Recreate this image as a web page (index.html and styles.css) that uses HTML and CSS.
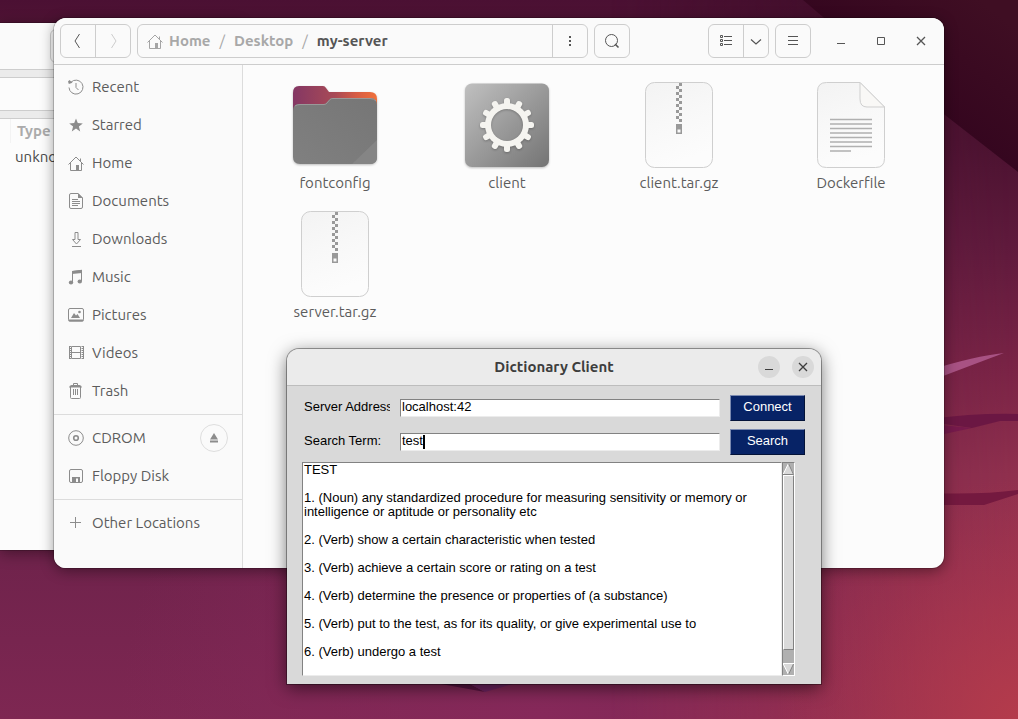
FILE: index.html
```html
<!DOCTYPE html>
<html lang="en">
<head>
<meta charset="utf-8">
<title>Desktop</title>
<link rel="stylesheet" href="styles.css">
</head>
<body class="desktop">

<svg class="wallpaper" viewBox="0 0 1018 719" preserveAspectRatio="none" aria-hidden="true">
  <defs>
    <linearGradient id="wp-base" x1="0" y1="0" x2="0" y2="1">
      <stop offset="0" stop-color="#4b1033"/>
      <stop offset="0.04" stop-color="#501434"/>
      <stop offset="0.78" stop-color="#70234c"/>
      <stop offset="1" stop-color="#7e2752"/>
    </linearGradient>
    <linearGradient id="wp-right" x1="0" y1="0" x2="0" y2="1">
      <stop offset="0" stop-color="#3b0c25"/>
      <stop offset="0.2" stop-color="#4b1230"/>
      <stop offset="0.34" stop-color="#5f1a3c"/>
      <stop offset="0.52" stop-color="#7b2446"/>
      <stop offset="0.66" stop-color="#90304e"/>
      <stop offset="0.85" stop-color="#a1344f"/>
      <stop offset="1" stop-color="#a8374e"/>
    </linearGradient>
    <linearGradient id="wp-fade" x1="0.6" y1="0" x2="1" y2="0">
      <stop offset="0" stop-color="#000"/>
      <stop offset="1" stop-color="#fff"/>
    </linearGradient>
    <mask id="wp-mask"><rect width="1018" height="719" fill="url(#wp-fade)"/></mask>
    <radialGradient id="wp-mid" gradientUnits="userSpaceOnUse" cx="540" cy="719" r="420">
      <stop offset="0" stop-color="#86295a"/>
      <stop offset="1" stop-color="#86295a" stop-opacity="0"/>
    </radialGradient>
    <radialGradient id="wp-corner" gradientUnits="userSpaceOnUse" cx="1018" cy="719" r="240">
      <stop offset="0" stop-color="#b43b4b"/>
      <stop offset="1" stop-color="#a1344f" stop-opacity="0"/>
    </radialGradient>
    <linearGradient id="wp-dark" gradientUnits="userSpaceOnUse" x1="910" y1="90" x2="980" y2="0">
      <stop offset="0" stop-color="#35061f"/>
      <stop offset="1" stop-color="#3f0e23"/>
    </linearGradient>
  </defs>
  <rect width="1018" height="719" fill="url(#wp-base)"/>
  <rect width="1018" height="719" fill="url(#wp-mid)"/>
  <rect width="1018" height="719" fill="url(#wp-right)" mask="url(#wp-mask)"/>
  <rect width="1018" height="719" fill="url(#wp-corner)"/>
  <path d="M803 0L823 17L945 115L1018 172V0Z" fill="url(#wp-dark)"/>
  <path d="M930 370Q975 356 1004 353Q980 362 930 381Z" fill="#a85283"/>
  <path d="M930 419Q975 413 1018 414V421H1000L972 428L930 422Z" fill="#6b1743"/>
  <path d="M930 424L972 428L930 437Z" fill="#761a4c"/>
  <path d="M930 493Q980 495 1018 490V494L984 505H930Z" fill="#74193f"/>
  <path d="M441 684H470L485 692Z" fill="#561340"/>
  <path d="M470 684H513L485 692Z" fill="#6d2360"/>
</svg>

<section class="window back-window" aria-label="Background window">
  <div class="back-header"><span class="back-button"></span></div>
  <div class="back-band"></div>
  <div class="back-toolbar"></div>
  <div class="back-band"></div>
  <div class="back-column">Type</div>
  <div class="back-cell">unknown</div>
</section>

<main class="window files">
  <header class="headerbar">
    <div class="group">
      <button class="tool" type="button" aria-label="Back"><svg class="icon" viewBox="0 0 16 16"><path d="M9.500 1L5 8L9.500 15" stroke="#555"/></svg></button>
      <button class="tool" type="button" aria-label="Forward"><svg class="icon" viewBox="0 0 16 16"><path d="M6.500 1L11 8L6.500 15" stroke="#ccc"/></svg></button>
    </div>
    <div class="group pathbar">
      <nav class="crumbs" aria-label="Path">
        <svg class="icon crumb-icon" viewBox="0 0 16 16"><path d="M.5 9.500L8 2L15.500 9.500M2.500 8V15.500H13.500V8M12.500 6V3.500" stroke="#a5a5a5"/><path d="M8 10h3v5.500h-3z" fill="#a5a5a5"/></svg>
        <a class="crumb" href="#home">Home</a>
        <span class="slash">/</span>
        <a class="crumb" href="#desktop">Desktop</a>
        <span class="slash">/</span>
        <a class="crumb current" href="#my-server">my-server</a>
      </nav>
      <button class="tool" type="button" aria-label="Folder menu"><svg class="icon" viewBox="0 0 16 16"><path d="M7 3h2v2h-2zM7 7h2v2h-2zM7 11h2v2h-2z" fill="#555"/></svg></button>
    </div>
    <button class="tool single" type="button" aria-label="Search files"><svg class="icon" viewBox="0 0 16 16"><circle cx="7.500" cy="7.500" r="6" stroke="#555"/><path d="M11 11L14.500 14.500" stroke="#555" stroke-width="1.600"/></svg></button>
    <div class="spacer"></div>
    <div class="group">
      <button class="tool" type="button" aria-label="List view"><svg class="icon" viewBox="0 0 16 16"><path d="M2.500 2.500h2v2h-2zM2.500 6.500h2v2h-2zM2.500 10.500h2v2h-2zM6 3.500h8M6 7.500h8M6 11.500h8" stroke="#555"/></svg></button>
      <button class="tool narrow" type="button" aria-label="View options"><svg class="icon" viewBox="0 0 16 16"><path d="M3 6.500L8 11L13 6.500" stroke="#555" stroke-width="1.200"/></svg></button>
    </div>
    <button class="tool single" type="button" aria-label="Menu"><svg class="icon" viewBox="0 0 16 16"><path d="M3 3.500h10M3 7.500h10M3 11.500h10" stroke="#555"/></svg></button>
    <div class="controls">
      <button class="control" type="button" aria-label="Minimize"><svg class="icon" viewBox="0 0 16 16"><path d="M4 10.500h8" stroke="#555"/></svg></button>
      <button class="control" type="button" aria-label="Maximize"><svg class="icon" viewBox="0 0 16 16"><path d="M4.500 4.500h7v7h-7z" stroke="#555"/></svg></button>
      <button class="control" type="button" aria-label="Close"><svg class="icon" viewBox="0 0 16 16"><path d="M4 4L12 12M12 4L4 12" stroke="#555" stroke-width="1.300"/></svg></button>
    </div>
  </header>

  <div class="files-body">
    <nav class="sidebar" aria-label="Places">
      <a class="place" href="#recent"><svg class="icon" viewBox="0 0 16 16"><path d="M3 3.200A7 7 0 1 1 1 8.500M8 4V8.500L10.500 11" stroke="#8c8c8c"/><path d="M0 2.500L1.500 1L4.500 3.800L.8 5Z" fill="#8c8c8c"/></svg>Recent</a>
      <a class="place" href="#starred"><svg class="icon" viewBox="0 0 16 16"><path d="M8 1.500L9.800 6.100L14.800 6.400L10.900 9.500L12.200 14.400L8 11.600L3.800 14.400L5.100 9.500L1.200 6.400L6.200 6.100Z" fill="#8c8c8c"/></svg>Starred</a>
      <a class="place" href="#home"><svg class="icon" viewBox="0 0 16 16"><path d="M.5 9.500L8 2L15.500 9.500M2.500 8V15.500H13.500V8M12.500 6V3.500" stroke="#8c8c8c"/><path d="M8 10h3v5.500h-3z" fill="#8c8c8c"/></svg>Home</a>
      <a class="place" href="#documents"><svg class="icon" viewBox="0 0 16 16"><path d="M3 .5H10L14.500 5V14Q14.500 15.500 13 15.500H3Q1.500 15.500 1.500 14V2Q1.500 .5 3 .5ZM4 6.500h6M4 8.500h8M4 10.500h8M4 12.500h6" stroke="#8c8c8c"/><path d="M10 0L15 5H10Z" fill="#8c8c8c"/></svg>Documents</a>
      <a class="place" href="#downloads"><svg class="icon" viewBox="0 0 16 16"><path d="M7 1.500H10V8.500H12.500L8.500 13L4.500 8.500H7ZM4 15.500h9" stroke="#8c8c8c"/></svg>Downloads</a>
      <a class="place" href="#music"><svg class="icon" viewBox="0 0 16 16"><path d="M4.500 13V2.500L13.500 1.500V12" stroke="#8c8c8c"/><path d="M4 2L14 .8V4L4 5Z" fill="#8c8c8c"/><ellipse cx="3" cy="13.500" rx="2.200" ry="1.900" fill="#8c8c8c"/><ellipse cx="11.800" cy="12.500" rx="2.200" ry="1.900" fill="#8c8c8c"/></svg>Music</a>
      <a class="place" href="#pictures"><svg class="icon" viewBox="0 0 16 16"><rect x=".5" y="1.500" width="15" height="12.500" rx="1.500" stroke="#8c8c8c"/><path d="M.5 12.500h15v1q0 1-1 1h-13q-1 0-1-1zM3 11L6 6L8 8.500L9.500 7L12 11Z" fill="#8c8c8c"/><circle cx="11.500" cy="5" r="1.300" fill="#8c8c8c"/></svg>Pictures</a>
      <a class="place" href="#videos"><svg class="icon" viewBox="0 0 16 16"><path d="M3.500 1.500h9v12h-9zM3.500 7.500h9" stroke="#8c8c8c"/><path d="M2 1v14M14.500 1v14" stroke="#8c8c8c" stroke-width="2" stroke-dasharray="1 1"/><path d="M1.500 1v13M15.500 1v13" stroke="#8c8c8c"/></svg>Videos</a>
      <a class="place" href="#trash"><svg class="icon" viewBox="0 0 16 16"><path d="M2.500 4V14.500Q2.500 15.500 3.500 15.500H11.500Q12.500 15.500 12.500 14.500V4M5.500 6v6M7.500 6v6M9.500 6v6M5.500 2.500V.5H9.500V2.500" stroke="#8c8c8c"/><path d="M1 4.500Q1.500 2 3.500 2H11.500Q13.500 2 14 4.500Z" fill="#8c8c8c"/></svg>Trash</a>
      <hr class="divider">
      <div class="place-row">
        <a class="place" href="#cdrom"><svg class="icon" viewBox="0 0 16 16"><circle cx="8" cy="8" r="7.300" stroke="#8c8c8c"/><circle cx="8" cy="8" r="2.300" stroke="#8c8c8c" stroke-width="1.600"/></svg>CDROM</a>
        <button class="eject" type="button" aria-label="Eject CDROM"><svg class="icon" viewBox="0 0 16 16"><path d="M8 3L12 9.500H4ZM4 10.500h8v2h-8z" fill="#8c8c8c"/></svg></button>
      </div>
      <a class="place" href="#floppy"><svg class="icon" viewBox="0 0 16 16"><rect x="1.500" y="1.500" width="13" height="13" rx="1.500" stroke="#8c8c8c"/><path d="M4 9h8v5.500h-2v-4h-2v4h-4z" fill="#8c8c8c"/></svg>Floppy Disk</a>
      <hr class="divider">
      <a class="place" href="#other"><svg class="icon" viewBox="0 0 16 16"><path d="M2 7.500h11M7.500 2v11" stroke="#8c8c8c"/></svg>Other Locations</a>
    </nav>

    <ul class="file-grid">
      <li class="file">
        <svg class="file-icon" viewBox="0 0 96 96" aria-hidden="true">
          <defs>
            <linearGradient id="folder-back"><stop offset="0" stop-color="#843764"/><stop offset="0.5" stop-color="#a84a56"/><stop offset="0.75" stop-color="#d65c45"/><stop offset="1" stop-color="#f0703a"/></linearGradient>
            <linearGradient id="folder-front" x1="1" y1="0" x2="0" y2="1"><stop offset="0" stop-color="#767676"/><stop offset="1" stop-color="#808080"/></linearGradient>
          </defs>
          <g class="soft-shadow">
            <path d="M12 9H36Q38 9 39 11L42 15H83Q90 15 90 22V70H6V16Q6 9 12 9Z" fill="url(#folder-back)"/>
            <path d="M12 27H37Q39 27 40 25L43 22Q44 21 46 21H83Q90 21 90 28V80Q90 87 83 87H13Q6 87 6 80V34Q6 27 12 27Z" fill="url(#folder-front)"/>
          </g>
          <path d="M8 29Q10 27.500 13 27.500H37Q39 27.500 40 26L43 22.500Q44 21.500 46 21.500H83Q87 21.500 89 24" fill="none" stroke="#999"/>
          <path d="M90 63V80Q90 87 83 87H65Z" fill="#858585"/>
        </svg>
        <span class="file-name">fontconfig</span>
      </li>
      <li class="file">
        <svg class="file-icon" viewBox="0 0 96 96" aria-hidden="true">
          <defs>
            <linearGradient id="app-fill" x1="0" y1="0" x2="1" y2="1"><stop offset="0" stop-color="#c0c0c0"/><stop offset="1" stop-color="#747474"/></linearGradient>
            <mask id="gear-mask"><rect width="96" height="96" fill="#fff"/><circle cx="48" cy="48" r="16" fill="#000"/></mask>
            <rect id="cog-bar" x="45" y="21" width="6" height="54" rx="2.500"/>
          </defs>
          <rect class="soft-shadow" x="6" y="6.500" width="84" height="83.500" rx="7" fill="url(#app-fill)"/>
          <g class="soft-shadow">
            <g mask="url(#gear-mask)" fill="#f5f4f0">
              <circle cx="48" cy="48" r="22"/>
              <use href="#cog-bar"/>
              <use href="#cog-bar" transform="rotate(30 48 48)"/>
              <use href="#cog-bar" transform="rotate(60 48 48)"/>
              <use href="#cog-bar" transform="rotate(90 48 48)"/>
              <use href="#cog-bar" transform="rotate(120 48 48)"/>
              <use href="#cog-bar" transform="rotate(150 48 48)"/>
            </g>
          </g>
        </svg>
        <span class="file-name">client</span>
      </li>
      <li class="file">
        <svg class="file-icon" viewBox="0 0 96 96" aria-hidden="true">
          <defs>
            <linearGradient id="paper" x1="0" y1="0" x2="0.300" y2="1"><stop offset="0" stop-color="#f3f3f3"/><stop offset="0.500" stop-color="#f8f8f8"/><stop offset="1" stop-color="#fcfcfc"/></linearGradient>
            <g id="archive">
              <rect x="14.500" y="5.500" width="67" height="85" rx="9" fill="url(#paper)" stroke="#cfcfcf"/>
              <path d="M49.500 6V45" stroke="#999" stroke-width="3" stroke-dasharray="3 3"/>
              <path d="M46.500 9V42" stroke="#999" stroke-width="3" stroke-dasharray="3 3"/>
              <rect x="45" y="47" width="6" height="10" fill="#999"/>
              <rect x="46.500" y="52.500" width="3" height="3" fill="#fafafa"/>
            </g>
          </defs>
          <use href="#archive"/>
        </svg>
        <span class="file-name">client.tar.gz</span>
      </li>
      <li class="file">
        <svg class="file-icon" viewBox="0 0 96 96" aria-hidden="true">
          <path d="M23.500 5.500H57L81.500 30V81.500Q81.500 90.500 72.500 90.500H23.500Q14.500 90.500 14.500 81.500V14.500Q14.500 5.500 23.500 5.500Z" fill="url(#paper)" stroke="#cfcfcf"/>
          <path d="M57 5.500L81.500 30H64Q57 30 57 22Z" fill="#f9f8f6" stroke="#cfcfcf"/>
          <path d="M27 42.500h42M27 47h42M27 51.500h42M27 56h42M27 60.500h42M27 65h42M27 69.500h42M27 74h21" stroke="#b0b0b0" stroke-width="1.300"/>
        </svg>
        <span class="file-name">Dockerfile</span>
      </li>
      <li class="file">
        <svg class="file-icon" viewBox="0 0 96 96" aria-hidden="true"><use href="#archive"/></svg>
        <span class="file-name">server.tar.gz</span>
      </li>
    </ul>
  </div>
</main>

<section class="window dialog" aria-labelledby="dialog-title">
  <header class="titlebar">
    <h1 class="title" id="dialog-title">Dictionary Client</h1>
    <div class="title-controls">
      <button class="round" type="button" aria-label="Minimize dialog"><svg class="icon" viewBox="0 0 16 16"><path d="M4 10.500h8" stroke="#3d3d3d"/></svg></button>
      <button class="round" type="button" aria-label="Close dialog"><svg class="icon" viewBox="0 0 16 16"><path d="M4 4L12 12M12 4L4 12" stroke="#3d3d3d" stroke-width="1.300"/></svg></button>
    </div>
  </header>
  <form class="lookup">
    <label class="lookup-label" for="server">Server Address:</label>
    <div class="field"><input class="entry" id="server" type="text" value="localhost:42"></div>
    <button class="action" type="button">Connect</button>
    <label class="lookup-label" for="term">Search Term:</label>
    <div class="field"><input class="entry" id="term" type="text" value="test"><span class="caret"></span></div>
    <button class="action" type="button">Search</button>
  </form>
  <div class="result">
    <textarea class="definition" rows="15" readonly aria-label="Definition">TEST

1. (Noun) any standardized procedure for measuring sensitivity or memory or intelligence or aptitude or personality etc

2. (Verb) show a certain characteristic when tested

3. (Verb) achieve a certain score or rating on a test

4. (Verb) determine the presence or properties of (a substance)

5. (Verb) put to the test, as for its quality, or give experimental use to

6. (Verb) undergo a test</textarea>
    <div class="scrollbar" aria-hidden="true">
      <svg class="arrow" viewBox="0 0 11 12"><path d="M5.500 0L11 11.500H0Z" fill="#d9d9d9"/><path d="M0 11.500L5.500 .5" stroke="#fff"/><path d="M5.500 .5L10.500 11.500H0" fill="none" stroke="#828282"/></svg>
      <div class="thumb"></div>
      <div class="trough"></div>
      <svg class="arrow" viewBox="0 0 11 12"><path d="M5.500 12L11 .5H0Z" fill="#d9d9d9"/><path d="M11 .5H0L5.500 11.500" fill="none" stroke="#fff"/><path d="M5.500 11.500L10.500 1" stroke="#828282"/></svg>
    </div>
  </div>
</section>

</body>
</html>
```
FILE: styles.css
```css
* { box-sizing: border-box; }

.desktop {
  position: relative;
  min-height: 100vh;
  margin: 0;
  overflow: hidden;
  background: #70234c;
  color: #5c5c5c;
  font: 15px/20px "Ubuntu", "Noto Sans", sans-serif;
}

.wallpaper {
  position: absolute;
  inset: 0;
  width: 100%;
  height: 100%;
}

button {
  margin: 0;
  padding: 0;
  border: 0;
  background: none;
  color: inherit;
  font: inherit;
}

a { color: inherit; text-decoration: none; }

.icon {
  flex: none;
  width: 16px;
  height: 16px;
  fill: none;
}

/* Windows on the desktop */
.window {
  position: absolute;
  box-shadow: 0 0 0 1px rgba(0, 0, 0, 0.18), 0 3px 14px rgba(0, 0, 0, 0.4);
}

.back-window {
  top: 23px;
  left: 0;
  width: 240px;
  min-height: 527px;
  background: #fcfcfc;
}

.back-header {
  height: 47px;
  padding: 6px 50px;
  border-bottom: 1px solid #cdcdcd;
  background: #fafafa;
}

.back-button {
  display: block;
  width: 36px;
  height: 34px;
  border: 1px solid #cdcdcd;
  border-radius: 6px;
}

.back-band {
  height: 8px;
  border-bottom: 1px solid #cdcdcd;
  background: #ebebeb;
}

.back-toolbar {
  height: 33px;
  border-bottom: 1px solid #cdcdcd;
}

.back-column {
  margin-left: 10px;
  padding: 2px 6px;
  border-left: 1px solid #f3f3f3;
  color: #ababab;
  font-weight: bold;
}

.back-cell {
  padding: 4px 15px;
  color: #4a4a4a;
}

/* File manager */
.files {
  top: 18px;
  right: 74px;
  left: 54px;
  display: flex;
  flex-direction: column;
  min-height: 550px;
  overflow: hidden;
  border-radius: 12px;
  background: #fcfcfc;
}

.headerbar {
  display: flex;
  gap: 6px;
  padding: 6px 3px 6px 6px;
  border-bottom: 1px solid #cdcdcd;
  background: #fafafa;
}

.group,
.single {
  height: 34px;
  border: 1px solid #cdcdcd;
  border-radius: 6px;
}

.group { display: flex; }

.tool {
  display: flex;
  align-items: center;
  justify-content: center;
  width: 34px;
}

.tool + .tool,
.crumbs + .tool {
  width: 35px;
  border-left: 1px solid #cdcdcd;
}

.tool.single { width: 36px; }
.tool + .tool.narrow { width: 25px; }

.pathbar { flex: 0 1 451px; }

.crumbs {
  display: flex;
  flex: 1;
  align-items: center;
  gap: 9px;
  padding: 0 9px;
  color: #a8a8a8;
  font-weight: bold;
}

.crumb-icon { margin-right: -3px; }
.current { color: #555; }
.slash { font-weight: normal; }
.spacer { flex: 1; }

.controls {
  display: flex;
  padding-left: 4px;
}

.control {
  display: flex;
  align-items: center;
  justify-content: center;
  width: 40px;
}

.files-body { display: flex; flex: 1; }

.sidebar {
  flex: none;
  width: 189px;
  padding-top: 3px;
  border-right: 1px solid #dcdcdc;
  background: #fafafa;
}

.place {
  display: flex;
  flex: 1;
  align-items: center;
  gap: 8px;
  height: 38px;
  padding-left: 14px;
}

.place-row {
  display: flex;
  align-items: center;
  padding-right: 14px;
}

.eject {
  display: flex;
  align-items: center;
  justify-content: center;
  width: 28px;
  height: 28px;
  border: 1px solid #dedede;
  border-radius: 50%;
}

.divider {
  margin: 4px 0;
  border: 0;
  border-top: 1px solid #dcdcdc;
}

.file-grid {
  display: grid;
  flex: 1;
  grid-template-columns: repeat(4, 1fr);
  align-content: start;
  row-gap: 13px;
  margin: 0;
  padding: 12px 7px 12px 6px;
  list-style: none;
}

.file {
  display: flex;
  flex-direction: column;
  align-items: center;
}

.file-icon { width: 96px; height: 96px; }
.soft-shadow { filter: drop-shadow(0 1px 1px rgba(0, 0, 0, 0.25)); }

/* Dictionary dialog */
.dialog {
  top: 349px;
  left: 287px;
  width: 534px;
  border-radius: 12px 12px 0 0;
  background: #d9d9d9;
  color: #000;
  font: 13px/14px "Liberation Sans", Arial, sans-serif;
  box-shadow: 0 0 0 1px rgba(0, 0, 0, 0.35), 0 4px 18px rgba(0, 0, 0, 0.55);
}

.titlebar {
  display: grid;
  grid-template-columns: 1fr auto 1fr;
  align-items: center;
  height: 37px;
  padding: 0 7px;
  border-bottom: 1px solid #bdbdbd;
  border-radius: 12px 12px 0 0;
  background: #ebebeb;
}

.title {
  grid-column: 2;
  margin: 0;
  color: #3d3d3d;
  font: bold 15px/20px "Ubuntu", "Noto Sans", sans-serif;
}

.title-controls {
  display: flex;
  justify-content: flex-end;
  gap: 12px;
}

.round {
  display: flex;
  align-items: center;
  justify-content: center;
  width: 22px;
  height: 22px;
  border-radius: 50%;
  background: #d9d9d9;
}

.lookup {
  display: grid;
  grid-template-columns: 86px 1fr 75px;
  align-items: center;
  gap: 8px 10px;
  padding: 9px 16px 7px 17px;
}

.lookup-label {
  overflow: hidden;
  padding-bottom: 2px;
  white-space: nowrap;
}

.field { position: relative; }

.entry {
  display: block;
  width: 100%;
  height: 18px;
  padding: 0 1px 3px;
  border: 1px solid;
  border-color: #828282 #ececec #ececec #828282;
  background: #fff;
  color: #000;
  font: inherit;
  line-height: 13px;
}

.caret {
  position: absolute;
  top: 2px;
  left: 23px;
  width: 2px;
  height: 14px;
  background: #000;
}

.action {
  height: 26px;
  padding-bottom: 2px;
  border: 1px solid;
  border-color: #7b8ab0 #041338 #041338 #7b8ab0;
  background: #072366;
  color: #fff;
}

.result {
  display: flex;
  margin: 0 26px 8px 15px;
}

.definition {
  flex: 1;
  min-width: 0;
  height: 214px;
  padding: 0 1px;
  overflow: hidden;
  border: 1px solid;
  border-color: #828282 #ececec #ececec #828282;
  background: #fff;
  color: #000;
  font: inherit;
  resize: none;
}

.scrollbar {
  display: flex;
  flex-direction: column;
  width: 13px;
  border: 1px solid;
  border-color: #828282 #fff #fff #828282;
  background: #b0b0b0;
}

.arrow { width: 11px; height: 12px; }

.thumb {
  flex: 1;
  border: 1px solid;
  border-color: #fff #828282 #828282 #fff;
  background: #d9d9d9;
}

.trough { height: 13px; }
```
